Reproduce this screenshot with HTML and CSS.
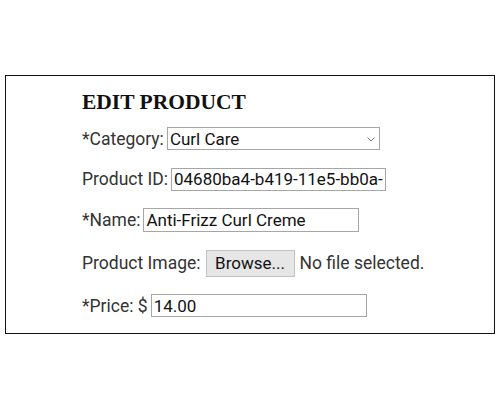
FILE: index.html
```html
<!DOCTYPE html>
<html>
<head>
<meta charset="utf-8">
<link rel="stylesheet" href="styles.css">
</head>
<body>
<div class="frame">
  <h1 class="title">EDIT PRODUCT</h1>
  <form class="form">
    <div class="row">
      <label class="label">*Category:</label>
      <div class="select-wrap">
        <select class="select"><option>Curl Care</option></select>
        <svg class="chev" width="8" height="5" viewBox="0 0 8 5"><path d="M0.5 0.5 L4 4 L7.5 0.5" fill="none" stroke="#777" stroke-width="1"/></svg>
      </div>
    </div>
    <div class="row">
      <label class="label">Product ID:</label>
      <input class="field field-id" type="text" value="04680ba4-b419-11e5-bb0a-0242ac130002">
    </div>
    <div class="row">
      <label class="label">*Name:</label>
      <input class="field field-name" type="text" value="Anti-Frizz Curl Creme">
    </div>
    <div class="row">
      <label class="label">Product Image:</label>
      <span class="file">
        <button type="button" class="browse">Browse...</button>
        <span class="nofile">No file selected.</span>
      </span>
    </div>
    <div class="row">
      <label class="label">*Price: $</label>
      <input class="field field-price" type="text" value="14.00">
    </div>
  </form>
</div>
</body>
</html>
```
FILE: styles.css
```css
html, body {
  margin: 0;
  padding: 0;
  background: #fff;
}
body {
  font-family: Roboto, "Noto Sans", sans-serif;
  color: #333;
}
.frame {
  box-sizing: border-box;
  width: 490px;
  margin: 75px 0 0 5px;
  border: 1px solid #111;
  padding: 14px 20px 16px 76px;
}
.title {
  margin: 0 0 13px 0;
  font-family: "Liberation Serif", "Times New Roman", serif;
  font-weight: bold;
  font-size: 21.5px;
  line-height: 24px;
  color: #111;
}
.form {
  display: flex;
  flex-direction: column;
  gap: 17.5px;
}
.row {
  display: flex;
  align-items: center;
  gap: 3px;
  font-size: 17.5px;
}
.label {
  color: #333;
  white-space: nowrap;
}
.select-wrap {
  position: relative;
  display: flex;
}
.select {
  appearance: none;
  -webkit-appearance: none;
  box-sizing: border-box;
  width: 213px;
  height: 23px;
  margin: 0;
  padding: 0 20px 0 2px;
  border: 1px solid #a6a6a6;
  border-radius: 0;
  background: #fff;
  font-family: Roboto, sans-serif;
  font-size: 17px;
  color: #111;
}
.chev {
  position: absolute;
  right: 5px;
  top: 10px;
}
.field {
  box-sizing: border-box;
  height: 23px;
  margin: 0;
  padding: 0 2px;
  border: 1px solid #a6a6a6;
  border-radius: 0;
  background: #fff;
  font-family: Roboto, sans-serif;
  font-size: 17px;
  color: #111;
  outline: none;
}
.field-id { width: 215px; }
.field-name { width: 216px; height: 24px; }
.field-price { width: 216px; }
.file {
  display: flex;
  align-items: center;
  gap: 5px;
}
.browse {
  box-sizing: border-box;
  height: 27px;
  width: 89px;
  margin: 0 0 0 2px;
  padding: 0;
  border: 1px solid #c2c2c2;
  border-radius: 0;
  background: #e6e6e6;
  font-family: Roboto, sans-serif;
  font-size: 17px;
  color: #111;
}
.nofile {
  color: #333;
}
```
